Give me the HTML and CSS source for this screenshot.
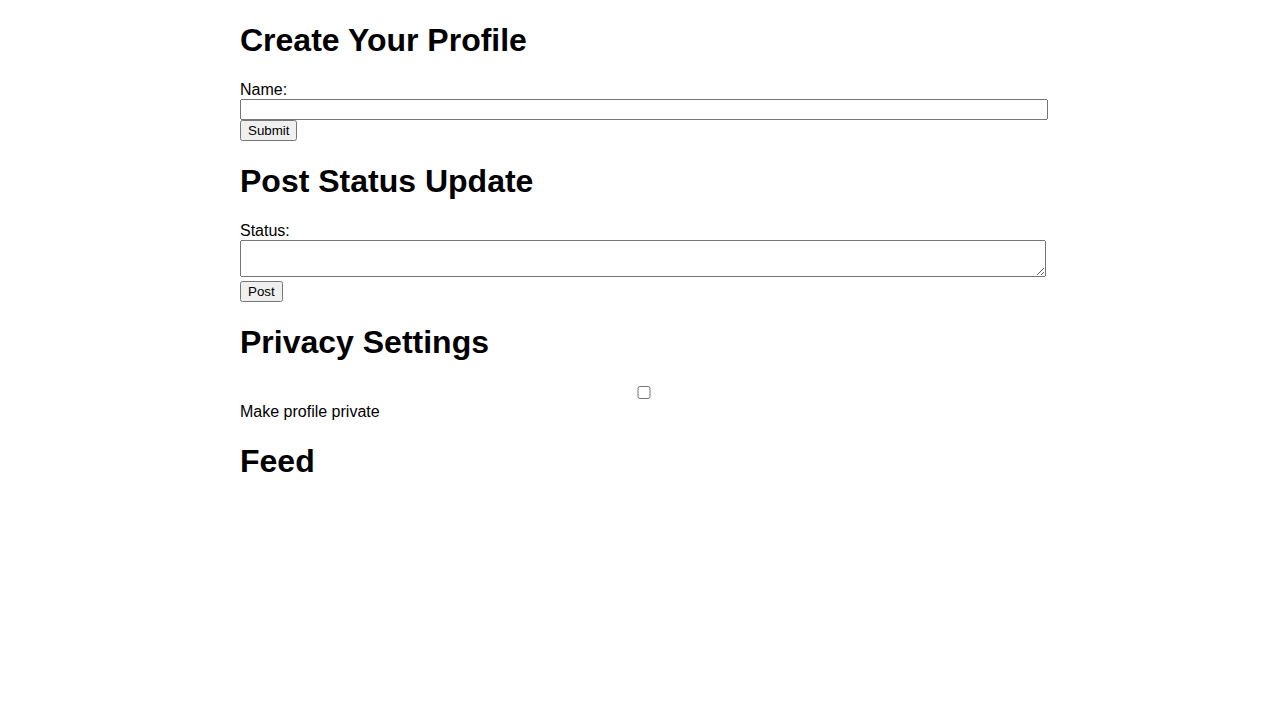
FILE: index.html
```html
<!DOCTYPE html>
<html lang="en">
<head>
<meta charset="utf-8">
<title>Profile</title>
<link rel="stylesheet" href="styles.css">
</head>
<body>
<div class="container">
  <h1 class="title">Create Your Profile</h1>
  <form class="form">
    <label class="field-label" for="name">Name:</label>
    <input class="text-input" type="text" id="name">
    <button class="btn" type="button">Submit</button>
  </form>
  <h1 class="title">Post Status Update</h1>
  <form class="form">
    <label class="field-label" for="status">Status:</label>
    <textarea class="text-area" id="status"></textarea>
    <button class="btn" type="button">Post</button>
  </form>
  <h1 class="title">Privacy Settings</h1>
  <div class="privacy">
    <input class="check" type="checkbox" id="private">
    <label for="private">Make profile private</label>
  </div>
  <h1 class="title">Feed</h1>
  <div class="feed"></div>
</div>
</body>
</html>
```
FILE: styles.css
```css
body {
  margin: 0;
  font-family: "Liberation Sans", Arial, sans-serif;
  font-size: 16px;
  color: #000;
  background: #fff;
}
.container {
  max-width: 800px;
  margin: 0 auto;
}
.title {
  font-size: 32px;
  line-height: 38px;
  font-weight: bold;
  margin: 21.44px 0;
}
.field-label {
  display: block;
}
.text-input {
  width: 100%;
}
.text-area {
  width: 100%;
  height: 37px;
  box-sizing: border-box;
  width: calc(100% + 6px);
}
.check {
  width: 100%;
}
```
